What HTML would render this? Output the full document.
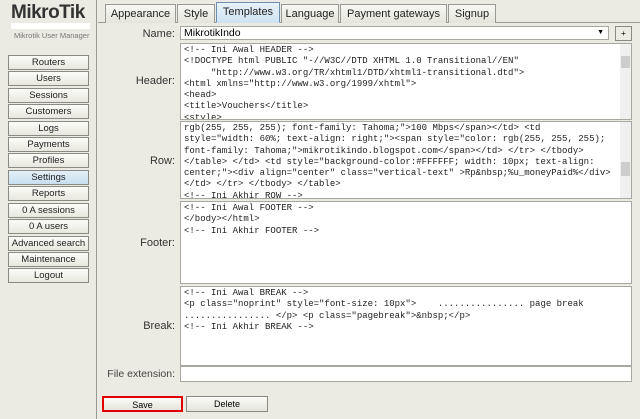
<!DOCTYPE html>
<html><head><style>
*{box-sizing:border-box;margin:0;padding:0}
body{width:640px;height:419px;background:#ecebe3;font-family:"Liberation Sans",sans-serif;position:relative;overflow:hidden}
.abs{position:absolute}
.side{left:0;top:0;width:97px;height:419px;border-right:1px solid #9a9a94}
.logo{left:11px;top:2px;font:bold 19px "Liberation Sans",sans-serif;color:#333;letter-spacing:-0.5px}
.wbar{left:11px;top:23px;width:79px;height:6px;background:#fff}
.sub{left:14px;top:31px;font-size:7.5px;color:#777}
.sb{position:absolute;left:8px;width:81px;height:15px;border:1px solid #8a8a84;background:linear-gradient(#fbfbf8,#e8e8e0);font-size:9.5px;text-align:center;line-height:13px;color:#222}
.tab{position:absolute;top:4px;height:19px;border:1px solid #9a9a94;border-bottom:none;background:linear-gradient(#f8f8f4,#e4e4dc);font-size:11px;line-height:18px;text-align:center;color:#222}
.lbl{position:absolute;font-size:11px;color:#333;text-align:right;width:80px;left:95px}
.ta{position:absolute;left:180px;width:452px;background:#fff;border:1px solid #a8a8a0;overflow:hidden}
pre{font:9px/11.3px "Liberation Mono",monospace;color:#222;padding:1px 3px;white-space:pre}
.sc{position:absolute;right:0;top:0;width:11px;bottom:0;background:#f0f0f0}
.btn{position:absolute;top:396px;height:16px;border:1px solid #8a8a84;background:linear-gradient(#fbfbf8,#e4e4dc);font-size:9px;text-align:center;line-height:14px}
</style></head><body>
<div class="abs side"></div>
<div class="abs logo">MikroTik</div>
<div class="abs wbar"></div>
<div class="abs sub">Mikrotik User Manager</div>
<div class="sb" style="top:55px">Routers</div>
<div class="sb" style="top:71px">Users</div>
<div class="sb" style="top:88px">Sessions</div>
<div class="sb" style="top:104px">Customers</div>
<div class="sb" style="top:121px">Logs</div>
<div class="sb" style="top:137px">Payments</div>
<div class="sb" style="top:153px">Profiles</div>
<div class="sb" style="top:170px;background:linear-gradient(#e4f0f8,#c8dff0)">Settings</div>
<div class="sb" style="top:186px">Reports</div>
<div class="sb" style="top:203px">0 A sessions</div>
<div class="sb" style="top:219px">0 A users</div>
<div class="sb" style="top:236px">Advanced search</div>
<div class="sb" style="top:252px">Maintenance</div>
<div class="sb" style="top:268px">Logout</div>

<div class="abs" style="left:98px;top:22px;width:542px;height:1px;background:#9a9a94"></div>
<div class="tab" style="left:105px;width:71px">Appearance</div>
<div class="tab" style="left:177px;width:38px">Style</div>
<div class="tab" style="left:216px;width:64px;top:2px;height:21px;background:linear-gradient(#e8f2fa,#cfe3f2);border-color:#6f8fb0;border-bottom:1px solid #cfe3f2">Templates</div>
<div class="tab" style="left:281px;width:58px">Language</div>
<div class="tab" style="left:340px;width:107px">Payment gateways</div>
<div class="tab" style="left:448px;width:48px">Signup</div>

<div class="lbl" style="top:28px">Name:</div>
<div class="abs" style="left:180px;top:26px;width:429px;height:14px;background:#fff;border:1px solid #a8a8a0;font-size:10.5px;line-height:12px;padding-left:3px">MikrotikIndo<span style="position:absolute;right:4px;top:0;font-size:7px">▼</span></div>
<div class="abs" style="left:615px;top:26px;width:17px;height:15px;border:1px solid #8a8a84;background:#ecebe3;font-size:8px;text-align:center;line-height:13px">+</div>

<div class="lbl" style="top:75px">Header:</div>
<div class="ta" style="top:43px;height:77px"><pre>&lt;!-- Ini Awal HEADER --&gt;
&lt;!DOCTYPE html PUBLIC "-//W3C//DTD XHTML 1.0 Transitional//EN"
     "http://www.w3.org/TR/xhtml1/DTD/xhtml1-transitional.dtd"&gt;
&lt;html xmlns="http://www.w3.org/1999/xhtml"&gt;
&lt;head&gt;
&lt;title&gt;Vouchers&lt;/title&gt;
&lt;style&gt;</pre><div class="sc"><div style="position:absolute;top:12px;left:1px;width:9px;height:12px;background:#cdcdcd"></div></div></div>

<div class="lbl" style="top:155px">Row:</div>
<div class="ta" style="top:121px;height:78px"><pre>rgb(255, 255, 255); font-family: Tahoma;"&gt;100 Mbps&lt;/span&gt;&lt;/td&gt; &lt;td
style="width: 60%; text-align: right;"&gt;&lt;span style="color: rgb(255, 255, 255);
font-family: Tahoma;"&gt;mikrotikindo.blogspot.com&lt;/span&gt;&lt;/td&gt; &lt;/tr&gt; &lt;/tbody&gt;
&lt;/table&gt; &lt;/td&gt; &lt;td style="background-color:#FFFFFF; width: 10px; text-align:
center;"&gt;&lt;div align="center" class="vertical-text" &gt;Rp&amp;nbsp;%u_moneyPaid%&lt;/div&gt;
&lt;/td&gt; &lt;/tr&gt; &lt;/tbody&gt; &lt;/table&gt;
&lt;!-- Ini Akhir ROW --&gt;</pre><div class="sc"><div style="position:absolute;top:40px;left:1px;width:9px;height:14px;background:#cdcdcd"></div></div></div>

<div class="lbl" style="top:237px">Footer:</div>
<div class="ta" style="top:201px;height:83px"><pre>&lt;!-- Ini Awal FOOTER --&gt;
&lt;/body&gt;&lt;/html&gt;
&lt;!-- Ini Akhir FOOTER --&gt;</pre></div>

<div class="lbl" style="top:320px">Break:</div>
<div class="ta" style="top:286px;height:80px"><pre>&lt;!-- Ini Awal BREAK --&gt;
&lt;p class="noprint" style="font-size: 10px"&gt;    ................ page break
................ &lt;/p&gt; &lt;p class="pagebreak"&gt;&amp;nbsp;&lt;/p&gt;
&lt;!-- Ini Akhir BREAK --&gt;</pre></div>

<div class="abs" style="left:95px;top:368px;width:80px;font-size:10.5px;color:#444;text-align:right">File extension:</div>
<div class="abs" style="left:180px;top:366px;width:452px;height:16px;background:#fff;border:1px solid #a8a8a0"></div>

<div class="btn" style="left:102px;width:81px;border:2px solid #e00000">Save</div>
<div class="btn" style="left:186px;width:82px">Delete</div>
</body></html>
